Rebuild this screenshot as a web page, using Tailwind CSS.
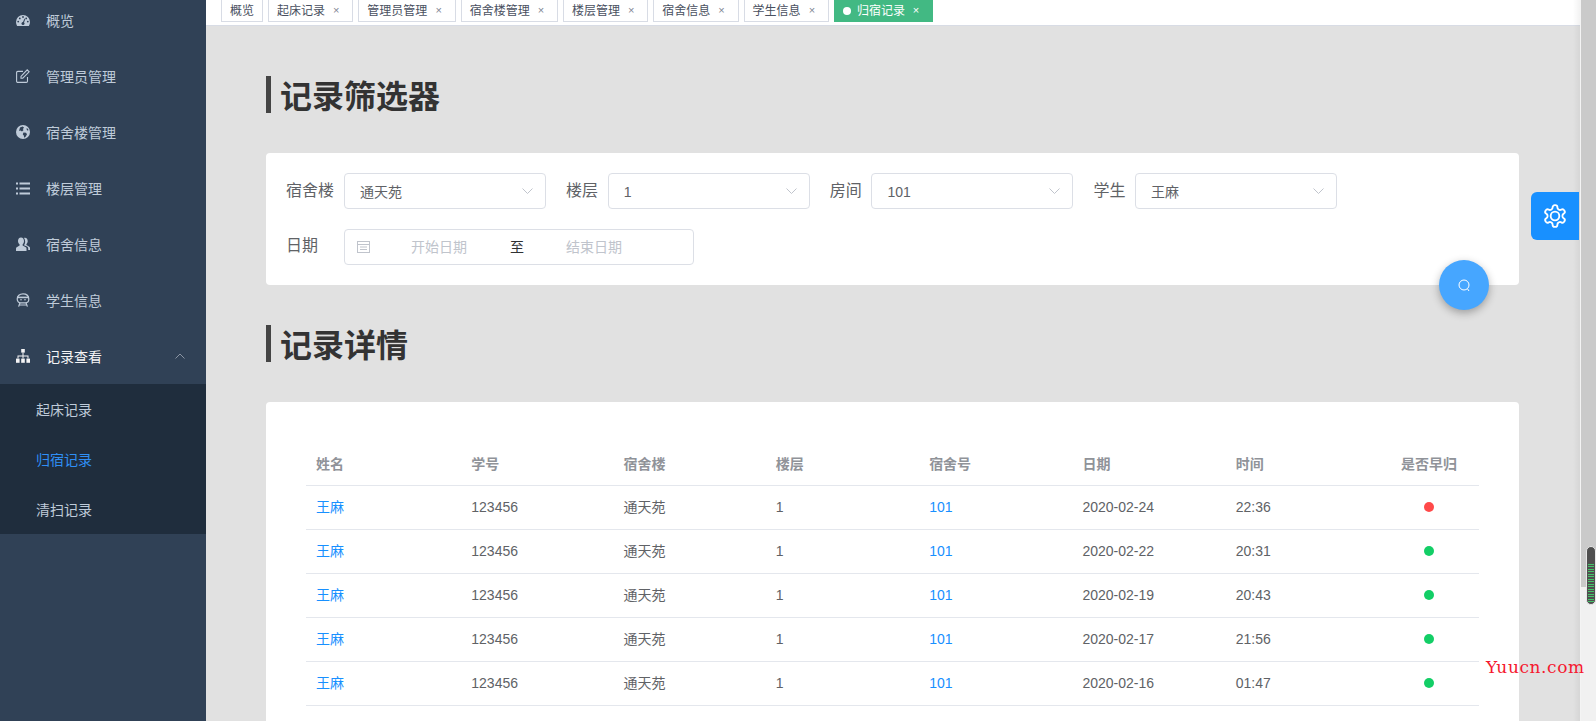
<!doctype html>
<html lang="zh">
<head>
  <meta charset="UTF-8">
  <meta name="viewport" content="width=device-width, initial-scale=1.0">
  <title>归宿记录</title>
  <script src="https://cdn.jsdelivr.net/npm/@tailwindcss/browser@4"></script>
</head>
<body class="h-[721px] w-full overflow-hidden flex relative bg-[#e1e1e1] font-['Liberation_Sans','Noto_Sans_CJK_SC',sans-serif]">

  <!-- 侧边栏 -->
  <aside class="w-[206px] shrink-0 h-full bg-[#304156] text-[14px] text-[#bfcbd9]">
    <ul class="-mt-2">
      <li class="h-[56px] flex items-center pl-[16px]">
        <svg class="w-[14px] h-[11px] mr-[16px]" viewBox="0 0 14 11">
          <path fill="#bfcbd9" d="M7 0a7 7 0 0 0-7 7c0 1.5.4 2.8 1.1 4h11.8c.7-1.2 1.1-2.5 1.1-4a7 7 0 0 0-7-7z"/>
          <g fill="#304156"><circle cx="2.2" cy="6.6" r=".9"/><circle cx="3.8" cy="3.4" r=".9"/><circle cx="7" cy="2" r=".9"/><circle cx="11.8" cy="6.6" r=".9"/><circle cx="10.2" cy="3.4" r=".9"/><circle cx="7" cy="8.6" r="1.5"/><path d="M6.4 8.2 8.6 3.6l.7.3-1.8 4.8z"/></g>
        </svg>
        <span class="pt-[2px]">概览</span>
      </li>
      <li class="h-[56px] flex items-center pl-[16px]">
        <svg class="w-[14px] h-[14px] mr-[16px]" viewBox="0 0 14 14" fill="none" stroke="#bfcbd9" stroke-width="1.1">
          <path d="M11.5 8v4.2a1.2 1.2 0 0 1-1.2 1.2H1.8a1.2 1.2 0 0 1-1.2-1.2V3.6a1.2 1.2 0 0 1 1.2-1.2H7"/>
          <path d="M5 7.4 11.2.9l1.9 1.9L6.8 9.2H5z"/>
        </svg>
        <span class="pt-[2px]">管理员管理</span>
      </li>
      <li class="h-[56px] flex items-center pl-[16px]">
        <svg class="w-[14px] h-[14px] mr-[16px]" viewBox="0 0 14 14">
          <circle cx="7" cy="7" r="7" fill="#bfcbd9"/>
          <path fill="#304156" d="M4 2.6 6.6 1.4 8 2.6 6.8 4.2 7.6 5 6 6.4 4.4 5.4 3 6zM7.4 7.4l2.6.4 1 1.4-1.4 2.6-1.4 1-.4-2.2-1-1.2zM11 3l1.6 2-1 .8L10.4 4z"/>
        </svg>
        <span class="pt-[2px]">宿舍楼管理</span>
      </li>
      <li class="h-[56px] flex items-center pl-[16px]">
        <svg class="w-[14px] h-[13px] mr-[16px]" viewBox="0 0 14 13" fill="#bfcbd9">
          <rect x="0" y=".5" width="2" height="2"/><rect x="3.5" y=".5" width="10.5" height="2"/>
          <rect x="0" y="5.5" width="2" height="2"/><rect x="3.5" y="5.5" width="10.5" height="2"/>
          <rect x="0" y="10.5" width="2" height="2"/><rect x="3.5" y="10.5" width="10.5" height="2"/>
        </svg>
        <span class="pt-[2px]">楼层管理</span>
      </li>
      <li class="h-[56px] flex items-center pl-[16px]">
        <svg class="w-[14px] h-[14px] mr-[16px]" viewBox="0 0 14 14" fill="#bfcbd9">
          <path d="M5 .5c1.9 0 3 1.5 3 3.6 0 1.4-.6 2.6-1.4 3.3v1.2l3.2 1.7c.5.3.7.7.7 1.2V14H0v-2.5c0-.5.2-.9.7-1.2l2.9-1.7V7.4C2.700 6.700 2 5.500 2 4.100 2 2 3.100.5 5 .5z"/>
          <path d="M9 .8c1.700 0 2.700 1.400 2.700 3.200 0 1.300-.5 2.400-1.300 3v1.100l2.900 1.600c.5.300.7.700.7 1.200V13h-1.800v-1.700c0-.9-.4-1.500-1.100-1.900L8 8.200c.9-1 1.300-2.500 1.100-4.100C9 3 8.600 1.800 7.900 1.100 8.200.9 8.600.8 9 .8z"/>
        </svg>
        <span class="pt-[2px]">宿舍信息</span>
      </li>
      <li class="h-[56px] flex items-center pl-[16px]">
        <svg class="w-[14px] h-[14px] mr-[16px]" viewBox="0 0 14 14" fill="none" stroke="#bfcbd9" stroke-width="1.2">
          <path d="M1.200 6C1.200 2.800 3.600.8 7 .8s5.800 2 5.800 5.200c0 2.400-1.600 3.800-3.300 3.800h-5C2.800 9.800 1.200 8.400 1.200 6z"/>
          <path d="M1.500 4.400h11" stroke-width="1.600"/>
          <path d="M4 9.800 2.600 13.600M10 9.800l1.400 3.800M3.400 12h7.200"/>
          <circle cx="5" cy="6.800" r=".8" fill="#bfcbd9" stroke="none"/><circle cx="9" cy="6.800" r=".8" fill="#bfcbd9" stroke="none"/>
        </svg>
        <span class="pt-[2px]">学生信息</span>
      </li>
      <li class="h-[56px] flex items-center pl-[16px] text-[#f4f4f5]">
        <svg class="w-[14px] h-[14px] mr-[16px]" viewBox="0 0 14 14" fill="#f4f4f5">
          <rect x="5.200" y="0" width="3.600" height="3.600"/>
          <path d="M6.500 3.600h1v3h5v2.800h-1V7.600h-4v1.800h-1V7.600h-4v1.800h-1V6.600h5z"/>
          <rect x="0" y="9.600" width="3.600" height="4.200"/><rect x="5.200" y="9.600" width="3.600" height="4.200"/><rect x="10.400" y="9.600" width="3.600" height="4.200"/>
        </svg>
        <span class="pt-[2px]">记录查看</span>
        <svg class="w-[10px] h-[6px] ml-[73px]" viewBox="0 0 10 6" fill="none" stroke="#8a94a3" stroke-width="1"><path d="M.5 5.500 5 1l4.500 4.500"/></svg>
      </li>
    </ul>
    <ul class="bg-[#1f2d3d]">
      <li class="h-[50px] flex items-center pl-[36px] pt-[2px]">起床记录</li>
      <li class="h-[50px] flex items-center pl-[36px] pt-[2px] text-[#2f8ff5]">归宿记录</li>
      <li class="h-[50px] flex items-center pl-[36px] pt-[2px]">清扫记录</li>
    </ul>
  </aside>

  <!-- 主体 -->
  <main class="w-[1374px] shrink-0 h-full flex flex-col relative overflow-hidden">
    <!-- 标签栏 -->
    <nav class="h-[26px] shrink-0 bg-white border-b border-[#d8dce5] pl-[15px] flex gap-[5px] text-[12px] text-[#495060]">
      <a class="h-[22px] px-[8px] flex items-center border border-t-0 border-[#d8dce5]">概览</a>
      <a class="h-[22px] pl-[8px] pr-[8px] flex items-center border border-t-0 border-[#d8dce5]">起床记录<span class="w-[16px] ml-[3.3px] text-center text-[11px] text-[#7f8794]">×</span></a>
      <a class="h-[22px] pl-[8px] pr-[8px] flex items-center border border-t-0 border-[#d8dce5]">管理员管理<span class="w-[16px] ml-[3.3px] text-center text-[11px] text-[#7f8794]">×</span></a>
      <a class="h-[22px] pl-[8px] pr-[8px] flex items-center border border-t-0 border-[#d8dce5]">宿舍楼管理<span class="w-[16px] ml-[3.3px] text-center text-[11px] text-[#7f8794]">×</span></a>
      <a class="h-[22px] pl-[8px] pr-[8px] flex items-center border border-t-0 border-[#d8dce5]">楼层管理<span class="w-[16px] ml-[3.3px] text-center text-[11px] text-[#7f8794]">×</span></a>
      <a class="h-[22px] pl-[8px] pr-[8px] flex items-center border border-t-0 border-[#d8dce5]">宿舍信息<span class="w-[16px] ml-[3.3px] text-center text-[11px] text-[#7f8794]">×</span></a>
      <a class="h-[22px] pl-[8px] pr-[8px] flex items-center border border-t-0 border-[#d8dce5]">学生信息<span class="w-[16px] ml-[3.3px] text-center text-[11px] text-[#7f8794]">×</span></a>
      <a class="h-[22px] pl-[8px] pr-[8px] flex items-center border border-t-0 border-[#42b983] bg-[#42b983] text-white"><i class="w-[8px] h-[8px] rounded-full bg-white mr-[6px]"></i>归宿记录<span class="w-[16px] ml-[3px] text-center text-[11px]">×</span></a>
    </nav>

    <div class="pl-[60px] pr-[61px] pt-[50px]">
      <h2 class="h-[37px] border-l-[5px] border-[#444] pl-[9px] text-[32px] leading-[43px] font-bold text-[#333]">记录筛选器</h2>

      <!-- 筛选器 -->
      <section class="mt-[40px] h-[132px] bg-white rounded-[4px] pl-[20px] pt-[20px] text-[16px] text-[#606266]">
        <div class="flex h-[36px] items-center">
          <label class="w-[58px]">宿舍楼</label>
          <div class="w-[202px] h-[36px] border border-[#dcdfe6] rounded-[4px] pl-[15px] pr-[12px] flex items-center justify-between text-[14px]">
            <span class="pt-[2px]">通天苑</span>
            <svg class="w-[11px] h-[6px]" viewBox="0 0 11 6" fill="none" stroke="#c0c4cc"><path d="M.5.500 5.500 5.500l5-5"/></svg>
          </div>
          <label class="w-[41.7px] ml-[20px]">楼层</label>
          <div class="w-[202px] h-[36px] border border-[#dcdfe6] rounded-[4px] pl-[15px] pr-[12px] flex items-center justify-between text-[14px]">
            <span class="pt-[2px]">1</span>
            <svg class="w-[11px] h-[6px]" viewBox="0 0 11 6" fill="none" stroke="#c0c4cc"><path d="M.5.500 5.500 5.500l5-5"/></svg>
          </div>
          <label class="w-[41.7px] ml-[20px]">房间</label>
          <div class="w-[202px] h-[36px] border border-[#dcdfe6] rounded-[4px] pl-[15px] pr-[12px] flex items-center justify-between text-[14px]">
            <span class="pt-[2px]">101</span>
            <svg class="w-[11px] h-[6px]" viewBox="0 0 11 6" fill="none" stroke="#c0c4cc"><path d="M.5.500 5.500 5.500l5-5"/></svg>
          </div>
          <label class="w-[41.7px] ml-[20px]">学生</label>
          <div class="w-[202px] h-[36px] border border-[#dcdfe6] rounded-[4px] pl-[15px] pr-[12px] flex items-center justify-between text-[14px]">
            <span class="pt-[2px]">王麻</span>
            <svg class="w-[11px] h-[6px]" viewBox="0 0 11 6" fill="none" stroke="#c0c4cc"><path d="M.5.500 5.500 5.500l5-5"/></svg>
          </div>
        </div>
        <div class="flex h-[36px] items-center mt-[20px]">
          <label class="w-[58px] pb-[2px]">日期</label>
          <div class="w-[350px] h-[36px] border border-[#dcdfe6] rounded-[4px] pl-[12px] flex items-center text-[14px] text-[#c0c4cc]">
            <svg class="w-[13px] h-[13px] mb-[2px]" viewBox="0 0 13 13" fill="none" stroke="#c0c4cc"><rect x=".5" y="1.500" width="12" height="11"/><path d="M.5 4.500h12M3 7h7M3 9.500h7"/></svg>
            <span class="ml-[41px]">开始日期</span>
            <span class="ml-[43px] text-[#303133]">至</span>
            <span class="ml-[42px]">结束日期</span>
          </div>
        </div>
      </section>

      <h2 class="mt-[40px] h-[37px] border-l-[5px] border-[#444] pl-[9px] text-[32px] leading-[43px] font-bold text-[#333]">记录详情</h2>

      <!-- 记录表格 -->
      <section class="mt-[40px] h-[400px] bg-white rounded-[4px] px-[40px] pt-[40px] text-[14px] text-[#606266]">
        <table class="w-full table-fixed border-separate border-spacing-0">
          <thead class="text-[#909399] font-bold">
            <tr class="h-[44px] text-left">
              <th class="border-b border-[#e4e7ed] pl-[10px] pt-[2px]">姓名</th>
              <th class="border-b border-[#e4e7ed] pl-[12px] pt-[2px]">学号</th>
              <th class="border-b border-[#e4e7ed] pl-[11px] pt-[2px]">宿舍楼</th>
              <th class="border-b border-[#e4e7ed] pl-[10px] pt-[2px]">楼层</th>
              <th class="border-b border-[#e4e7ed] pl-[10px] pt-[2px]">宿舍号</th>
              <th class="border-b border-[#e4e7ed] pl-[10px] pt-[2px]">日期</th>
              <th class="border-b border-[#e4e7ed] pl-[10px] pt-[2px]">时间</th>
              <th class="w-[100px] border-b border-[#e4e7ed] text-center pt-[2px]">是否早归</th>
            </tr>
          </thead>
          <tbody>
            <tr class="h-[44px]">
              <td class="border-b border-[#e4e7ed] pl-[10px] text-[#1890ff]">王麻</td>
              <td class="border-b border-[#e4e7ed] pl-[12px]">123456</td>
              <td class="border-b border-[#e4e7ed] pl-[11px]">通天苑</td>
              <td class="border-b border-[#e4e7ed] pl-[10px]">1</td>
              <td class="border-b border-[#e4e7ed] pl-[10px] text-[#1890ff]">101</td>
              <td class="border-b border-[#e4e7ed] pl-[10px]">2020-02-24</td>
              <td class="border-b border-[#e4e7ed] pl-[10px]">22:36</td>
              <td class="border-b border-[#e4e7ed] pb-[2px]"><i class="block mx-auto w-[10px] h-[10px] rounded-full bg-[#ff4949]"></i></td>
            </tr>
            <tr class="h-[44px]">
              <td class="border-b border-[#e4e7ed] pl-[10px] text-[#1890ff]">王麻</td>
              <td class="border-b border-[#e4e7ed] pl-[12px]">123456</td>
              <td class="border-b border-[#e4e7ed] pl-[11px]">通天苑</td>
              <td class="border-b border-[#e4e7ed] pl-[10px]">1</td>
              <td class="border-b border-[#e4e7ed] pl-[10px] text-[#1890ff]">101</td>
              <td class="border-b border-[#e4e7ed] pl-[10px]">2020-02-22</td>
              <td class="border-b border-[#e4e7ed] pl-[10px]">20:31</td>
              <td class="border-b border-[#e4e7ed] pb-[2px]"><i class="block mx-auto w-[10px] h-[10px] rounded-full bg-[#13ce66]"></i></td>
            </tr>
            <tr class="h-[44px]">
              <td class="border-b border-[#e4e7ed] pl-[10px] text-[#1890ff]">王麻</td>
              <td class="border-b border-[#e4e7ed] pl-[12px]">123456</td>
              <td class="border-b border-[#e4e7ed] pl-[11px]">通天苑</td>
              <td class="border-b border-[#e4e7ed] pl-[10px]">1</td>
              <td class="border-b border-[#e4e7ed] pl-[10px] text-[#1890ff]">101</td>
              <td class="border-b border-[#e4e7ed] pl-[10px]">2020-02-19</td>
              <td class="border-b border-[#e4e7ed] pl-[10px]">20:43</td>
              <td class="border-b border-[#e4e7ed] pb-[2px]"><i class="block mx-auto w-[10px] h-[10px] rounded-full bg-[#13ce66]"></i></td>
            </tr>
            <tr class="h-[44px]">
              <td class="border-b border-[#e4e7ed] pl-[10px] text-[#1890ff]">王麻</td>
              <td class="border-b border-[#e4e7ed] pl-[12px]">123456</td>
              <td class="border-b border-[#e4e7ed] pl-[11px]">通天苑</td>
              <td class="border-b border-[#e4e7ed] pl-[10px]">1</td>
              <td class="border-b border-[#e4e7ed] pl-[10px] text-[#1890ff]">101</td>
              <td class="border-b border-[#e4e7ed] pl-[10px]">2020-02-17</td>
              <td class="border-b border-[#e4e7ed] pl-[10px]">21:56</td>
              <td class="border-b border-[#e4e7ed] pb-[2px]"><i class="block mx-auto w-[10px] h-[10px] rounded-full bg-[#13ce66]"></i></td>
            </tr>
            <tr class="h-[44px]">
              <td class="border-b border-[#e4e7ed] pl-[10px] text-[#1890ff]">王麻</td>
              <td class="border-b border-[#e4e7ed] pl-[12px]">123456</td>
              <td class="border-b border-[#e4e7ed] pl-[11px]">通天苑</td>
              <td class="border-b border-[#e4e7ed] pl-[10px]">1</td>
              <td class="border-b border-[#e4e7ed] pl-[10px] text-[#1890ff]">101</td>
              <td class="border-b border-[#e4e7ed] pl-[10px]">2020-02-16</td>
              <td class="border-b border-[#e4e7ed] pl-[10px]">01:47</td>
              <td class="border-b border-[#e4e7ed] pb-[2px]"><i class="block mx-auto w-[10px] h-[10px] rounded-full bg-[#13ce66]"></i></td>
            </tr>
          </tbody>
        </table>
      </section>
    </div>

    <!-- 右侧阴影 -->
    <div class="absolute top-0 bottom-0 right-0 w-[7px] bg-linear-to-r from-transparent to-black/5"></div>

    <!-- 搜索按钮 -->
    <button class="absolute left-[1233px] top-[260px] w-[50px] h-[50px] rounded-full bg-[#46a6ff] shadow-[0_3px_8px_rgba(0,0,0,0.3)] flex items-center justify-center">
      <svg class="w-[13px] h-[13px]" viewBox="0 0 13 13" fill="none" stroke="#fff"><circle cx="6" cy="6" r="5"/><path d="m9.500 9.800 1.500 2.200"/></svg>
    </button>

    <!-- 设置按钮 -->
    <div class="absolute right-[1px] top-[192px] w-[48px] h-[48px] bg-[#1890ff] rounded-l-[6px] flex items-center justify-center">
      <svg class="w-[26px] h-[26px]" viewBox="0 0 24 24" fill="none" stroke="#fff" stroke-width="1.700" stroke-linejoin="round">
        <path d="M12.220 2h-.44a2 2 0 0 0-2 2v.18a2 2 0 0 1-1 1.730l-.43.250a2 2 0 0 1-2 0l-.15-.08a2 2 0 0 0-2.730.730l-.22.380a2 2 0 0 0 .730 2.730l.15.100a2 2 0 0 1 1 1.720v.510a2 2 0 0 1-1 1.740l-.15.090a2 2 0 0 0-.730 2.730l.22.380a2 2 0 0 0 2.730.730l.15-.08a2 2 0 0 1 2 0l.43.250a2 2 0 0 1 1 1.730V20a2 2 0 0 0 2 2h.44a2 2 0 0 0 2-2v-.18a2 2 0 0 1 1-1.730l.43-.25a2 2 0 0 1 2 0l.15.080a2 2 0 0 0 2.730-.730l.22-.39a2 2 0 0 0-.730-2.730l-.15-.08a2 2 0 0 1-1-1.740v-.5a2 2 0 0 1 1-1.740l.15-.09a2 2 0 0 0 .730-2.730l-.22-.38a2 2 0 0 0-2.730-.730l-.15.080a2 2 0 0 1-2 0l-.43-.25a2 2 0 0 1-1-1.730V4a2 2 0 0 0-2-2z"/>
        <circle cx="12" cy="12" r="4"/>
      </svg>
    </div>
  </main>

  <!-- 滚动条 -->
  <div class="flex-1 h-full border-l border-[#f4f4f4] bg-[#f1f1f1] relative">
    <div class="w-[15px] h-[587px] bg-[#cacaca]"></div>
    <div class="absolute left-[5px] top-[546px] w-[10px] h-[59px] rounded-full bg-[#4f4f4f] border border-[#e8e8e8] overflow-hidden">
      <div class="mt-[17px] h-[38px] mx-[1px] bg-[repeating-linear-gradient(to_bottom,#45c46a_0,#45c46a_1px,#4f4f4f_1px,#4f4f4f_2.500px)]"></div>
    </div>
  </div>

  <!-- 水印 -->
  <span class="absolute left-[1486px] top-[656px] text-[17px] leading-[22px] tracking-[0.6px] text-[#f5182f] font-['DejaVu_Serif',serif]">Yuucn.com</span>
</body>
</html>
